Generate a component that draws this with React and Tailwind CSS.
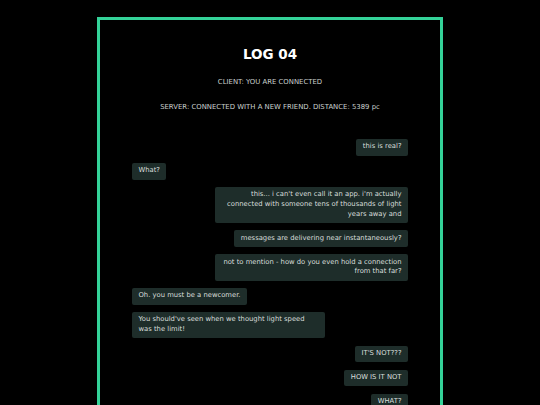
const messages = [
  { from: "me", text: "this is real?" },
  { from: "them", text: "What?" },
  {
    from: "me",
    text: "this... i can't even call it an app. i'm actually connected with someone tens of thousands of light years away and",
  },
  { from: "me", text: "messages are delivering near instantaneously?" },
  { from: "me", text: "not to mention - how do you even hold a connection from that far?" },
  { from: "them", text: "Oh. you must be a newcomer." },
  { from: "them", text: "You should've seen when we thought light speed was the limit!" },
  { from: "me", text: "IT'S NOT???" },
  { from: "me", text: "HOW IS IT NOT" },
  { from: "me", text: "WHAT?" },
];

const Bubble = ({ from, text }) => {
  const mine = from === "me";
  return (
    <div className={mine ? "flex justify-end" : "flex justify-start"}>
      <div
        className={`max-w-[70%] bg-[#1e2d2a] text-[#d8dedb] text-[6.8px] leading-[9.7px] px-[6.5px] py-[3.5px] rounded-[2px] ${
          mine ? "text-right" : "text-left"
        }`}
      >
        {text}
      </div>
    </div>
  );
};

export default function App() {
  return (
    <div
      className="h-screen overflow-hidden bg-black flex justify-center items-start"
      style={{ fontFamily: '"DejaVu Sans", Verdana, sans-serif' }}
    >
      <div className="shrink-0 w-[346px] mt-[17px] border-[3px] border-[#34d399] px-[32px] pb-[60px]">
        <h1 className="mt-[25.5px] text-center text-white font-bold text-[13.5px] leading-[16px]">
          LOG 04
        </h1>
        <p className="mt-[15.5px] text-center text-[#c9cfcc] text-[6.9px] leading-[10px]">
          CLIENT: YOU ARE CONNECTED
        </p>
        <p className="mt-[15.3px] text-center text-[#c9cfcc] text-[6.9px] leading-[10px]">
          SERVER: CONNECTED WITH A NEW FRIEND. DISTANCE: 5389 pc
        </p>
        <div className="mt-[26.5px] flex flex-col gap-[7.3px]">
          {messages.map((m, i) => (
            <Bubble key={i} {...m} />
          ))}
        </div>
      </div>
    </div>
  );
}
